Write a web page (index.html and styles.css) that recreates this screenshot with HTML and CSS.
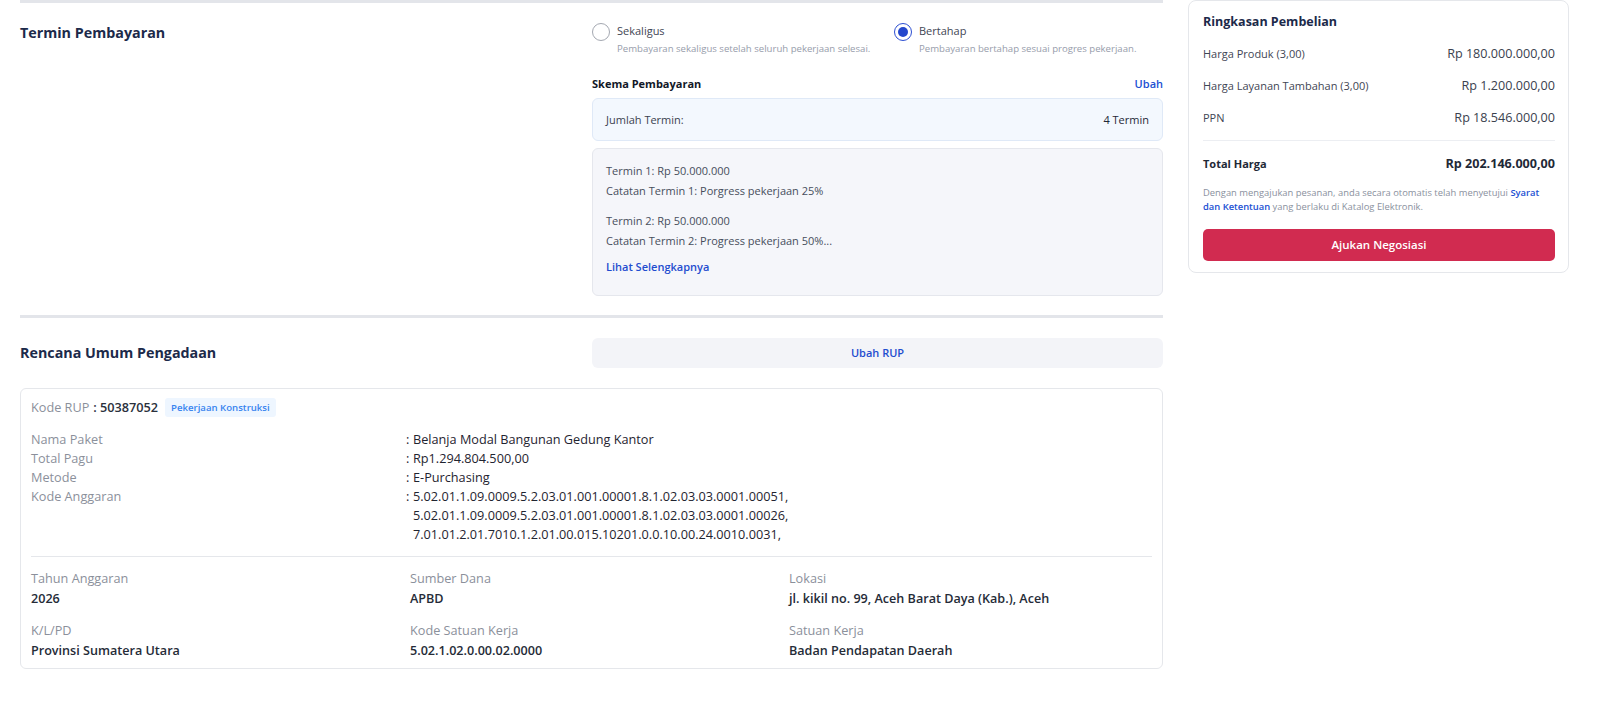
FILE: index.html
```html
<!DOCTYPE html>
<html lang="id">
<head>
<meta charset="utf-8">
<title>Checkout</title>
<link rel="stylesheet" href="styles.css">
</head>
<body>
<div class="page">
  <main class="main">
    <section class="section termin">
      <h2 class="section-title">Termin Pembayaran</h2>
      <div class="termin-body">
        <div class="radio-group">
          <div class="radio-option">
            <span class="radio"></span>
            <div class="radio-text">
              <div class="radio-label">Sekaligus</div>
              <div class="radio-desc">Pembayaran sekaligus setelah seluruh pekerjaan selesai.</div>
            </div>
          </div>
          <div class="radio-option">
            <span class="radio checked"></span>
            <div class="radio-text">
              <div class="radio-label">Bertahap</div>
              <div class="radio-desc">Pembayaran bertahap sesuai progres pekerjaan.</div>
            </div>
          </div>
        </div>
        <div class="skema-head">
          <span class="skema-title">Skema Pembayaran</span>
          <a class="link">Ubah</a>
        </div>
        <div class="jumlah-box">
          <span>Jumlah Termin:</span>
          <span class="jumlah-value">4 Termin</span>
        </div>
        <div class="termin-list">
          <div class="termin-item">
            <p>Termin 1: Rp 50.000.000</p>
            <p>Catatan Termin 1: Porgress pekerjaan 25%</p>
          </div>
          <div class="termin-item">
            <p>Termin 2: Rp 50.000.000</p>
            <p>Catatan Termin 2: Progress pekerjaan 50%...</p>
          </div>
          <a class="link see-more">Lihat Selengkapnya</a>
        </div>
      </div>
    </section>

    <section class="section rup">
      <div class="rup-head">
        <h2 class="section-title">Rencana Umum Pengadaan</h2>
        <button class="btn-ghost">Ubah RUP</button>
      </div>
      <div class="rup-card">
        <div class="kode-row">
          <span class="muted">Kode RUP</span>
          <span class="kode-value">: 50387052</span>
          <span class="badge">Pekerjaan Konstruksi</span>
        </div>
        <div class="info-grid">
          <div class="info-label">Nama Paket</div>
          <div class="info-value"><span class="colon">:</span><div>Belanja Modal Bangunan Gedung Kantor</div></div>
          <div class="info-label">Total Pagu</div>
          <div class="info-value"><span class="colon">:</span><div>Rp1.294.804.500,00</div></div>
          <div class="info-label">Metode</div>
          <div class="info-value"><span class="colon">:</span><div>E-Purchasing</div></div>
          <div class="info-label">Kode Anggaran</div>
          <div class="info-value"><span class="colon">:</span>
            <div>
              <div>5.02.01.1.09.0009.5.2.03.01.001.00001.8.1.02.03.03.0001.00051,</div>
              <div>5.02.01.1.09.0009.5.2.03.01.001.00001.8.1.02.03.03.0001.00026,</div>
              <div>7.01.01.2.01.7010.1.2.01.00.015.10201.0.0.10.00.24.0010.0031,</div>
            </div>
          </div>
        </div>
        <hr class="card-divider">
        <div class="detail-grid">
          <div class="detail"><div class="detail-label">Tahun Anggaran</div><div class="detail-value">2026</div></div>
          <div class="detail"><div class="detail-label">Sumber Dana</div><div class="detail-value">APBD</div></div>
          <div class="detail"><div class="detail-label">Lokasi</div><div class="detail-value">jl. kikil no. 99, Aceh Barat Daya (Kab.), Aceh</div></div>
          <div class="detail"><div class="detail-label">K/L/PD</div><div class="detail-value">Provinsi Sumatera Utara</div></div>
          <div class="detail"><div class="detail-label">Kode Satuan Kerja</div><div class="detail-value">5.02.1.02.0.00.02.0000</div></div>
          <div class="detail"><div class="detail-label">Satuan Kerja</div><div class="detail-value">Badan Pendapatan Daerah</div></div>
        </div>
      </div>
    </section>
  </main>

  <aside class="summary">
    <h3 class="summary-title">Ringkasan Pembelian</h3>
    <div class="sum-row"><span>Harga Produk (3,00)</span><span class="sum-val">Rp 180.000.000,00</span></div>
    <div class="sum-row"><span>Harga Layanan Tambahan (3,00)</span><span class="sum-val">Rp 1.200.000,00</span></div>
    <div class="sum-row"><span>PPN</span><span class="sum-val">Rp 18.546.000,00</span></div>
    <hr class="sum-divider">
    <div class="sum-row total"><span>Total Harga</span><span class="sum-val">Rp 202.146.000,00</span></div>
    <p class="disclaimer"><span>Dengan mengajukan pesanan, anda secara otomatis telah menyetujui <a class="link">Syarat</a></span><br><span><a class="link">dan Ketentuan</a> yang berlaku di Katalog Elektronik.</span></p>
    <button class="btn-primary">Ajukan Negosiasi</button>
  </aside>
</div>
</body>
</html>
```

FILE: styles.css
```css
* { box-sizing: border-box; }

body {
  margin: 0;
  background: #ffffff;
  font-family: "Open Sans", "Noto Sans", sans-serif;
  color: #1f2937;
}

.page {
  display: flex;
  align-items: flex-start;
  gap: 25px;
  padding: 0 31px 0 20px;
}

.main {
  flex: 1;
  min-width: 0;
}

.section {
  border-top: 3px solid #e3e5ea;
}

.section-title {
  margin: 0;
  font-size: 14.3px;
  line-height: 20px;
  font-weight: 700;
  color: #1c2a4a;
}

/* Termin */
.termin {
  display: grid;
  grid-template-columns: 572px 1fr;
  padding: 20px 0 19px;
}

.radio-group {
  display: grid;
  grid-template-columns: 302px 1fr;
}

.radio-option {
  display: flex;
  gap: 7px;
  align-items: flex-start;
}

.radio {
  flex: none;
  width: 18px;
  height: 18px;
  border-radius: 50%;
  border: 1px solid #a4a8b1;
  background: #fff;
}

.radio.checked {
  border: 1.5px solid #2d4fd2;
  display: grid;
  place-items: center;
}

.radio.checked::after {
  content: "";
  width: 10px;
  height: 10px;
  border-radius: 50%;
  background: #2447cc;
}

.radio-label {
  font-size: 11px;
  line-height: 15px;
  color: #3f4654;
}

.radio-desc {
  margin-top: 4px;
  font-size: 9.6px;
  line-height: 14px;
  color: #979dab;
}

.skema-head {
  margin-top: 20px;
  display: flex;
  justify-content: space-between;
  align-items: center;
  line-height: 16px;
}

.skema-title {
  font-size: 11px;
  font-weight: 700;
  color: #111827;
}

.link {
  color: #2150d3;
  font-weight: 600;
  font-size: 11px;
  text-decoration: none;
}

.jumlah-box {
  margin-top: 6px;
  display: flex;
  justify-content: space-between;
  align-items: center;
  padding: 12px 13px;
  border: 1px solid #dfe9f7;
  background: #f3f8fe;
  border-radius: 6px;
  font-size: 11px;
  line-height: 17px;
  color: #3b4250;
}

.jumlah-value {
  color: #1f2937;
  font-weight: 500;
}

.termin-list {
  margin-top: 7px;
  padding: 12px 13px 18px;
  border: 1px solid #e5e7ed;
  background: #f5f6fa;
  border-radius: 6px;
  font-size: 11px;
  line-height: 19.5px;
  color: #474e5c;
}

.termin-item p {
  margin: 0;
}

.termin-item + .termin-item {
  margin-top: 11px;
}

.see-more {
  display: block;
  margin-top: 7px;
  font-weight: 600;
  color: #1f4dcf;
}

/* RUP */
.rup {
  padding-top: 20px;
}

.rup-head {
  display: grid;
  grid-template-columns: 572px 1fr;
  align-items: center;
}

.btn-ghost {
  height: 30px;
  border: none;
  border-radius: 6px;
  background: #f3f4f8;
  color: #1f4dcf;
  font-family: inherit;
  font-size: 11px;
  font-weight: 600;
}

.rup-card {
  margin-top: 20px;
  border: 1px solid #e5e7eb;
  border-radius: 6px;
  padding: 9px 10px 8px;
}

.kode-row {
  display: flex;
  align-items: center;
  height: 19px;
  font-size: 12.7px;
}

.muted {
  color: #8b909b;
}

.kode-value {
  margin-left: 4px;
  font-weight: 600;
  color: #2a303c;
}

.badge {
  margin-left: 7px;
  height: 19px;
  line-height: 19px;
  padding: 0 6px;
  border-radius: 3px;
  background: #eef6ff;
  color: #3784ef;
  font-size: 9.6px;
  font-weight: 600;
}

.info-grid {
  margin-top: 13px;
  display: grid;
  grid-template-columns: 375px 1fr;
  font-size: 12.7px;
  line-height: 19px;
}

.info-label {
  color: #8b909b;
}

.info-value {
  display: flex;
  color: #1f2430;
}

.colon {
  width: 7px;
  flex: none;
}

.card-divider {
  margin: 12.5px 0 12px;
  border: none;
  border-top: 1px solid #e5e7eb;
}

.detail-grid {
  display: grid;
  grid-template-columns: repeat(3, 1fr);
  column-gap: 16px;
  row-gap: 13px;
  line-height: 19.5px;
}

.detail-label {
  font-size: 12.7px;
  color: #8b909b;
}

.detail-value {
  font-size: 12.6px;
  font-weight: 600;
  color: #252b37;
}

/* Summary */
.summary {
  flex: none;
  width: 381px;
  border: 1px solid #e5e7eb;
  border-radius: 8px;
  padding: 12px 13px 11px 14px;
}

.summary-title {
  margin: 0 0 13px;
  font-size: 12.5px;
  line-height: 18px;
  font-weight: 700;
  color: #1c2a4a;
}

.sum-row {
  display: flex;
  justify-content: space-between;
  align-items: center;
  height: 18px;
  font-size: 11px;
  color: #3f4654;
}

.sum-row + .sum-row {
  margin-top: 14px;
}

.sum-val {
  font-size: 12.6px;
  color: #3a414e;
}

.sum-divider {
  margin: 14px 0 13px;
  border: none;
  border-top: 1px solid #eceef2;
}

.sum-row.total {
  font-weight: 700;
  color: #1f2937;
}

.sum-row.total .sum-val {
  font-size: 12.6px;
  color: #1f2937;
}

.disclaimer {
  margin: 13.5px 0 0;
  font-size: 9.4px;
  line-height: 14px;
  color: #8a919e;
}

.disclaimer .link {
  font-size: inherit;
}

.btn-primary {
  display: block;
  width: 100%;
  height: 32px;
  margin-top: 15px;
  border: none;
  border-radius: 5px;
  background: #d12b50;
  color: #ffffff;
  font-family: inherit;
  font-size: 11.5px;
  font-weight: 600;
}
```
